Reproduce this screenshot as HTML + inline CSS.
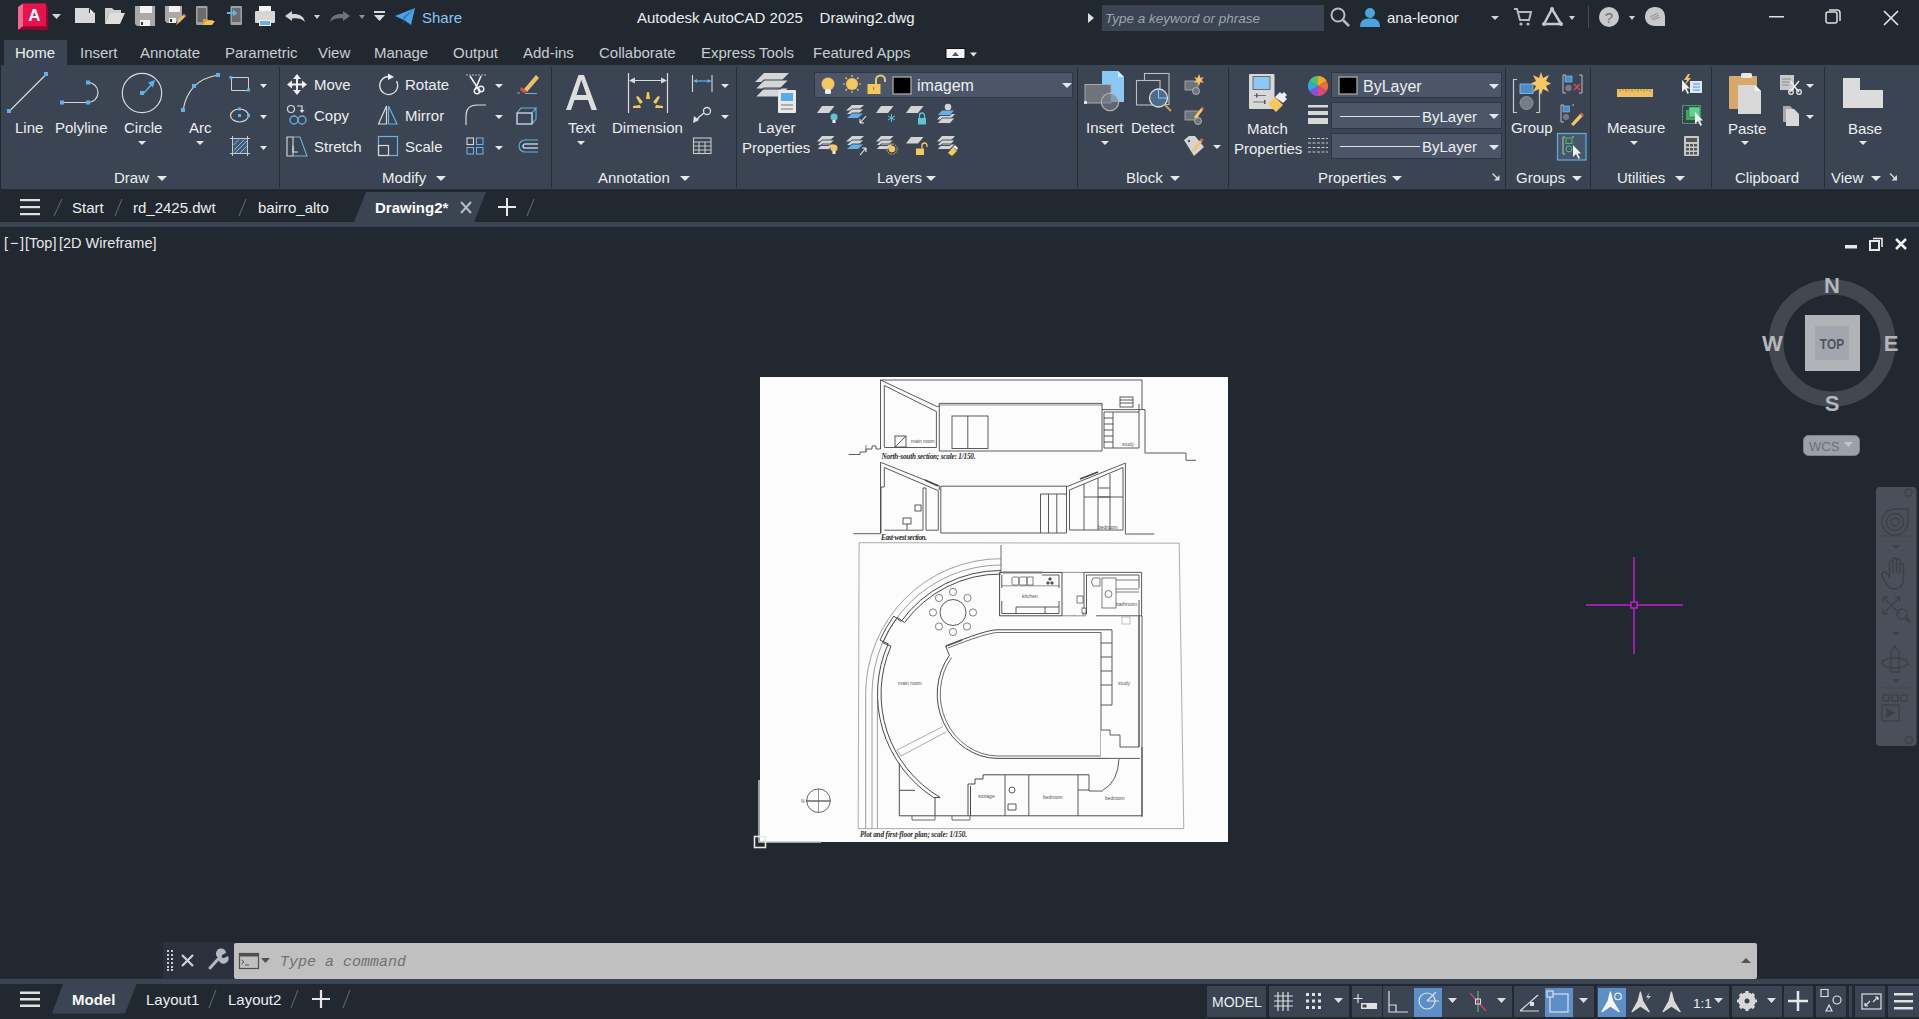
<!DOCTYPE html>
<html><head><meta charset="utf-8">
<style>
*{margin:0;padding:0;box-sizing:border-box}
html,body{width:1919px;height:1019px;overflow:hidden;background:#212830;font-family:"Liberation Sans",sans-serif;color:#f2f2f2}
.a{position:absolute}
.t{position:absolute;white-space:nowrap;font-size:15px;line-height:15px;color:#eceef0}
svg{position:absolute;overflow:visible}
#title{left:0;top:0;width:1919px;height:35px;background:#212830}
#tabs{left:0;top:35px;width:1919px;height:30px;background:#212830}
#ribbon{left:1px;top:65px;width:1918px;height:124px;background:#3b4453}
.sep{position:absolute;top:67px;width:1px;height:121px;background:#262d37}
#ftabs{left:0;top:189px;width:1919px;height:33px;background:#212830}
#strip{left:0;top:222px;width:1919px;height:5px;background:#3b4453}
#vp{left:0;top:227px;width:1919px;height:753px;background:#212830}
#cmd{left:234px;top:943px;width:1523px;height:36px;background:#c0c0c0;border-radius:2px}
#cmdl{left:163px;top:942px;width:72px;height:37px;background:#2a313c}
#strip2{left:0;top:979px;width:1919px;height:5px;background:#3b4453}
#status{left:0;top:984px;width:1919px;height:35px;background:#212830}
.dd{position:absolute;width:0;height:0;border-left:5px solid transparent;border-right:5px solid transparent;border-top:5px solid #e6e6e6}
.dds{position:absolute;width:0;height:0;border-left:4px solid transparent;border-right:4px solid transparent;border-top:4px solid #e6e6e6}
</style></head><body>
<div id="title" class="a"></div>
<div id="tabs" class="a"></div>
<div id="ribbon" class="a"></div>
<div id="ftabs" class="a"></div>
<div id="strip" class="a"></div>
<div id="vp" class="a"></div>
<div id="strip2" class="a"></div>
<div id="status" class="a"></div>
<div id="cmdl" class="a"></div>
<div id="cmd" class="a"></div>

<!-- TITLE TEXT -->
<div class="t" style="left:637px;top:10px">Autodesk AutoCAD 2025&nbsp;&nbsp;&nbsp;&nbsp;Drawing2.dwg</div>

<!-- TABS -->
<div class="a" style="left:4px;top:40px;width:63px;height:25px;background:#3b4453"></div>
<div class="t" style="left:15px;top:45px">Home</div>
<div class="t" style="left:80px;top:45px;color:#c9ccd1">Insert</div>
<div class="t" style="left:140px;top:45px;color:#c9ccd1">Annotate</div>
<div class="t" style="left:225px;top:45px;color:#c9ccd1">Parametric</div>
<div class="t" style="left:318px;top:45px;color:#c9ccd1">View</div>
<div class="t" style="left:374px;top:45px;color:#c9ccd1">Manage</div>
<div class="t" style="left:453px;top:45px;color:#c9ccd1">Output</div>
<div class="t" style="left:523px;top:45px;color:#c9ccd1">Add-ins</div>
<div class="t" style="left:599px;top:45px;color:#c9ccd1">Collaborate</div>
<div class="t" style="left:701px;top:45px;color:#c9ccd1">Express Tools</div>
<div class="t" style="left:813px;top:45px;color:#c9ccd1">Featured Apps</div>

<!-- PANEL SEPARATORS -->
<div class="sep" style="left:279px"></div>
<div class="sep" style="left:551px"></div>
<div class="sep" style="left:736px"></div>
<div class="sep" style="left:1077px"></div>
<div class="sep" style="left:1228px"></div>
<div class="sep" style="left:1505px"></div>
<div class="sep" style="left:1590px"></div>
<div class="sep" style="left:1711px"></div>
<div class="sep" style="left:1824px"></div>

<!-- PANEL LABELS -->
<div class="t" style="left:114px;top:170px">Draw</div>
<div class="t" style="left:382px;top:170px">Modify</div>
<div class="t" style="left:598px;top:170px">Annotation</div>
<div class="t" style="left:877px;top:170px">Layers</div>
<div class="t" style="left:1126px;top:170px">Block</div>
<div class="t" style="left:1318px;top:170px">Properties</div>
<div class="t" style="left:1516px;top:170px">Groups</div>
<div class="t" style="left:1617px;top:170px">Utilities</div>
<div class="t" style="left:1735px;top:170px">Clipboard</div>
<div class="t" style="left:1831px;top:170px">View</div>


<!-- ICON LAYER: TITLE -->
<svg width="1919" height="1019" style="left:0;top:0">
<!-- A logo -->
<polygon points="18,7 23,3.5 46,3.5 48,8 48,30 18,30" fill="#8e0a30"/>
<polygon points="18,7 23,3.5 23,26.5 18,30" fill="#f06a92"/>
<rect x="23" y="3.5" width="23" height="23" fill="#e8124e"/>
<polygon points="18,30 23,26.5 46,26.5 48,30" fill="#8a0a2e"/>
<text x="34.5" y="21" font-family="Liberation Sans" font-weight="bold" font-size="17" fill="#fff" text-anchor="middle">A</text>
<polygon points="52,14 61,14 56.5,19" fill="#d0d3d8"/>
<!-- new -->
<path d="M75,8 H89 L95,13 V23 H75 Z" fill="#d9d9d9"/>
<path d="M89,8 V13 H95 Z" fill="#212830"/><path d="M90,9 L94,13 H90Z" fill="#f4f4f4"/>
<!-- open -->
<path d="M105,8 H112 L114,10 H121 V13 H109 L105,24 Z" fill="#cfcfcf"/>
<path d="M109,13 H125 L120,24 H105 Z" fill="#dedede"/>
<!-- save -->
<path d="M135,6 H155 V26 H137 L135,24 Z" fill="#a9a9a9"/>
<rect x="140" y="6" width="12" height="7" fill="#f2f2f2"/>
<rect x="140" y="20" width="10" height="6" fill="#f2f2f2"/><rect x="141" y="22" width="2" height="3" fill="#333"/>
<!-- save as -->
<path d="M165,6 H182 V18 L175,23 H167 L165,21 Z" fill="#a9a9a9"/>
<rect x="169" y="6" width="11" height="6" fill="#f2f2f2"/>
<rect x="169" y="18" width="7" height="5" fill="#f2f2f2"/><rect x="170" y="19" width="2" height="3" fill="#333"/>
<path d="M176,25 L178,20 L184,14 L186,16 L180,22 Z" fill="#f0c060"/><path d="M183,15 L184,14 L186,16 L185,17Z" fill="#e06060"/>
<!-- open web -->
<rect x="196" y="6" width="11.5" height="19" rx="1" fill="#a0a0a0"/><rect x="197.5" y="8" width="8.5" height="14" fill="#6c6c6c"/>
<path d="M203,19 H207 L208,20 H213 V21 H206 L203,25 Z" fill="#e0a030"/><path d="M206,21 H215 L212,25 H203 Z" fill="#f5c454"/>
<!-- save web -->
<rect x="230.5" y="6" width="11.5" height="19" rx="1" fill="#a0a0a0"/><rect x="232" y="8" width="8.5" height="14" fill="#6c6c6c"/>
<path d="M227,12 H233 V9.5 L237.5,13 L233,16.5 V14 H227 Z" fill="#5ab4f0"/>
<!-- plot -->
<rect x="259" y="6" width="12" height="7" fill="#f4f4f4"/>
<rect x="255" y="11" width="20" height="12" rx="1" fill="#d6d6d6"/>
<rect x="259" y="20" width="12" height="6" fill="#f4f4f4"/><rect x="260" y="21" width="10" height="4" fill="#63b3ec"/>
<!-- undo -->
<path d="M285,16 L292,11 V14 C299,13.5 304,16 305,22 C302,18.5 297,18 292,18.5 V21 Z" fill="#d4d4d4"/>
<polygon points="314,15 320,15 317,19" fill="#d0d3d8"/>
<!-- redo -->
<path d="M350,16 L343,11 V14 C336,13.5 331,16 330,22 C333,18.5 338,18 343,18.5 V21 Z" fill="#6c737d"/>
<polygon points="359,15 365,15 362,19" fill="#8a9099"/>
<!-- customize -->
<rect x="374" y="11" width="11" height="2" fill="#d8d8d8"/><polygon points="374,15 385,15 379.5,21" fill="#d8d8d8"/>
<!-- share -->
<path d="M395,16 L415,8 L411,25 L404,20 Z" fill="#4aa3e6"/><path d="M404,20 L415,8 L403,17 L404,25 Z" fill="#2f7fc0"/>
</svg>
<div class="t" style="left:422px;top:10px;color:#8ec6f0">Share</div>


<!-- TITLE RIGHT -->
<svg width="1919" height="1019" style="left:0;top:0">
<polygon points="1088,13 1094,18 1088,23" fill="#e0e0e0"/>
<rect x="1102" y="5" width="222" height="26" fill="#3b4453"/>
<circle cx="1338" cy="15" r="6.5" fill="none" stroke="#b8bcc2" stroke-width="2"/>
<line x1="1343" y1="20" x2="1349" y2="26" stroke="#b8bcc2" stroke-width="2.5"/>
<circle cx="1370" cy="13" r="5" fill="#4da3e0"/>
<path d="M1360,27 C1360,20 1364,18.5 1370,18.5 C1376,18.5 1380,20 1380,27 Z" fill="#4da3e0"/>
<polygon points="1491,16 1499,16 1495,20" fill="#d0d3d8"/>
<!-- cart -->
<path d="M1514,9 H1517 L1520,20 H1529 L1531,12 H1518" fill="none" stroke="#b5b9bf" stroke-width="2"/>
<circle cx="1521" cy="24" r="1.6" fill="#b5b9bf"/><circle cx="1528" cy="24" r="1.6" fill="#b5b9bf"/>
<!-- autodesk A -->
<path d="M1552,9 L1544,24 H1561 Z" fill="none" stroke="#c4c7cc" stroke-width="2.5" stroke-linejoin="round"/>
<circle cx="1552" cy="9" r="2" fill="#c4c7cc"/><circle cx="1544" cy="24" r="2" fill="#c4c7cc"/><circle cx="1561" cy="24" r="2" fill="#c4c7cc"/>
<polygon points="1569,16 1575,16 1572,20" fill="#d0d3d8"/>
<rect x="1588" y="6" width="1" height="22" fill="#444c58"/>
<circle cx="1609" cy="17" r="10" fill="#c6c8cc"/>
<text x="1609" y="22.5" font-family="Liberation Sans" font-size="15" fill="#6c7078" text-anchor="middle">?</text>
<polygon points="1629,16 1635,16 1632,20" fill="#d0d3d8"/>
<path d="M1655,7 C1661,7 1665,11 1665,17 V26 H1655 C1649,26 1645,22 1645,17 C1645,11 1649,7 1655,7 Z" fill="#c6c8cc"/>
<path d="M1650,17 L1658,13 M1651,19 L1659,15 M1653,20 L1660,17" stroke="#8a8e95" stroke-width="1"/>
<!-- window controls -->
<rect x="1769" y="16" width="15" height="1.5" fill="#e0e0e0"/>
<rect x="1826" y="12" width="11" height="11" rx="2" fill="none" stroke="#e0e0e0" stroke-width="1.5"/>
<path d="M1829,10 H1837 Q1840,10 1840,13 V21" fill="none" stroke="#e0e0e0" stroke-width="1.5"/>
<path d="M1884,11 L1898,25 M1898,11 L1884,25" stroke="#e8e8e8" stroke-width="1.6"/>
</svg>
<div class="t" style="left:1105px;top:11px;font-style:italic;color:#9ca3ad;font-size:13.5px">Type a keyword or phrase</div>
<div class="t" style="left:1387px;top:10px;color:#eceef0">ana-leonor</div>


<!-- DRAW PANEL -->
<svg width="1919" height="1019" style="left:0;top:0">
<g stroke="#d8d8d8" stroke-width="1.2" fill="none">
<line x1="9.5" y1="111" x2="46" y2="74.5"/>
<path d="M62,102.5 H88 A10,10 0 0 0 88,82.5"/>
<circle cx="142" cy="93" r="19.7"/>
<path d="M183,110.5 Q188,80 218,75"/>
<path d="M231.5,77.5 H248.5 V90.5 H231.5 Z" stroke="#d0d0d0" stroke-width="1"/>
<ellipse cx="239.5" cy="115.5" rx="9" ry="6.5"/>
<path d="M232.5,136 V156 M247.5,136 V156 M230,138.5 H250 M230,153.5 H250" stroke="#c8c8c8" stroke-width="1"/>
</g>
<g fill="#5eb2ea">
<rect x="7" y="109" width="4" height="4"/><rect x="44" y="72" width="4" height="4"/>
<rect x="60" y="100.5" width="4" height="4"/><rect x="86" y="100.5" width="4" height="4"/><rect x="86" y="80.5" width="4" height="4"/>
<rect x="140" y="91" width="4" height="4"/>
<rect x="181" y="108" width="4" height="4"/><rect x="192" y="84" width="4" height="4"/><rect x="216" y="73" width="4" height="4"/>
<rect x="229.5" y="76" width="3" height="3"/><rect x="247" y="88.5" width="3" height="3"/>
<rect x="238" y="107.5" width="3" height="3"/><rect x="238" y="114" width="3" height="3"/><rect x="247" y="114" width="3" height="3"/>
</g>
<path d="M143,94 L153,83" stroke="#5eb2ea" stroke-width="1.4"/><polygon points="155,80 148,82.5 153,87.5" fill="#5eb2ea"/>
<rect x="233" y="139" width="14" height="14" fill="#4a6a8c" opacity="0.6"/>
<path d="M233.5,145 L239,139.5 M234,150 L244.5,139.5 M235,153 L247,141 M240,153 L247,146" stroke="#8cc0e8" stroke-width="0.9"/>
<g fill="#e6e6e6">
<polygon points="260,84 267,84 263.5,88"/><polygon points="260,115 267,115 263.5,119"/><polygon points="260,146 267,146 263.5,150"/>
<polygon points="138,141 146,141 142,145"/><polygon points="196,141 204,141 200,145"/>
<polygon points="157,176 167,176 162,181"/>
</g>
</svg>
<div class="t" style="left:15px;top:120px">Line</div>
<div class="t" style="left:55px;top:120px">Polyline</div>
<div class="t" style="left:124px;top:120px">Circle</div>
<div class="t" style="left:189px;top:120px">Arc</div>


<!-- MODIFY PANEL -->
<svg width="1919" height="1019" style="left:0;top:0">
<!-- move -->
<g fill="#f0f0f0">
<rect x="296" y="78" width="2" height="13"/><rect x="290" y="83.5" width="13" height="2"/>
<polygon points="297,74 301,79 293,79"/><polygon points="297,95 301,90 293,90"/>
<polygon points="287,84.5 292,80.5 292,88.5"/><polygon points="307,84.5 302,80.5 302,88.5"/>
</g>
<!-- copy -->
<circle cx="291" cy="109" r="3.5" fill="none" stroke="#d8d8d8" stroke-width="1.2"/>
<path d="M297,106 H302 V111" fill="none" stroke="#e0e0e0" stroke-width="1.2"/><polygon points="299.5,110 304.5,110 302,113" fill="#e0e0e0"/>
<circle cx="294" cy="120" r="4" fill="none" stroke="#6ab0e0" stroke-width="1.3"/>
<circle cx="302" cy="120" r="4" fill="none" stroke="#6ab0e0" stroke-width="1.3"/>
<!-- stretch -->
<path d="M287,137 H293 V156 H287 Z" fill="none" stroke="#d8d8d8" stroke-width="1.1"/>
<path d="M293,137 H300 L307,156 H293" fill="none" stroke="#6ab0e0" stroke-width="1.1"/>
<path d="M293,146 V152 H298" fill="none" stroke="#e0e0e0" stroke-width="1.1"/>
<!-- rotate -->
<path d="M389,76.5 A9,9 0 1 0 396.5,81" fill="none" stroke="#e0e0e0" stroke-width="1.3"/>
<polygon points="388,73.5 394,77 388,80" fill="#f0f0f0"/>
<!-- mirror -->
<path d="M386.5,106 L378.5,124 H386.5 Z" fill="none" stroke="#d8d8d8" stroke-width="1.2"/>
<path d="M388.5,106 L397,124 H388.5 Z" fill="none" stroke="#6ab0e0" stroke-width="1.2"/>
<!-- scale -->
<rect x="378.5" y="136.5" width="19" height="19" fill="none" stroke="#6ab0e0" stroke-width="1.2"/>
<rect x="378.5" y="145.5" width="10" height="10" fill="none" stroke="#d8d8d8" stroke-width="1.2"/>
<!-- trim -->
<path d="M466,75 H486" stroke="#b8b8b8" stroke-width="1.2" stroke-dasharray="2,1"/>
<path d="M470,76 L479,90 M481,76 L475,90" stroke="#f0f0f0" stroke-width="1.6"/>
<circle cx="477" cy="91" r="2.8" fill="none" stroke="#f0f0f0" stroke-width="1.4"/>
<circle cx="481" cy="89" r="2.8" fill="none" stroke="#f0f0f0" stroke-width="1.4"/>
<!-- erase -->
<path d="M524,89 L536,75 L539,78 L527,92 Z" fill="#f0c060"/>
<path d="M521,87 L524,89 L527,92 L524,93 L520,90Z" fill="#e05050"/>
<path d="M517,93 H520 M525,93.5 H537" stroke="#6ab0e0" stroke-width="1"/>
<!-- fillet -->
<path d="M466,125 V116 Q466,105 477,105 H486" fill="none" stroke="#d8d8d8" stroke-width="1.2"/>
<!-- 3d box -->
<path d="M517,113 H532 V124 H517 Z M517,113 L521,108 H536 L532,113 M536,108 V119 L532,124" fill="none" stroke="#6ab0e0" stroke-width="1.1"/>
<path d="M517,113 H532 V124 H517 Z" fill="none" stroke="#d8d8d8" stroke-width="1.1"/>
<!-- array -->
<g fill="none" stroke-width="1.1">
<rect x="467" y="138" width="6.5" height="6.5" stroke="#d8d8d8"/><rect x="476.5" y="138" width="6.5" height="6.5" stroke="#6ab0e0"/>
<rect x="467" y="147.5" width="6.5" height="6.5" stroke="#6ab0e0"/><rect x="476.5" y="147.5" width="6.5" height="6.5" stroke="#6ab0e0"/>
</g>
<!-- offset -->
<path d="M538,140 H525 A6,6 0 0 0 525,152 H538 M538,144 H525 A2,2 0 0 0 525,148 H538" fill="none" stroke="#6ab0e0" stroke-width="1.1"/>
<path d="M538,144 H525 A2,2 0 0 0 525,148 H538" fill="none" stroke="#d8d8d8" stroke-width="1.1"/>
<g fill="#e6e6e6">
<polygon points="495,84 503,84 499,88"/><polygon points="495,115 503,115 499,119"/><polygon points="495,146 503,146 499,150"/>
<polygon points="436,176 446,176 441,181"/>
</g>
</svg>
<div class="t" style="left:314px;top:77px">Move</div>
<div class="t" style="left:405px;top:77px">Rotate</div>
<div class="t" style="left:314px;top:108px">Copy</div>
<div class="t" style="left:405px;top:108px">Mirror</div>
<div class="t" style="left:314px;top:139px">Stretch</div>
<div class="t" style="left:405px;top:139px">Scale</div>


<!-- ANNOTATION PANEL -->
<svg width="1919" height="1019" style="left:0;top:0">
<path d="M566,110 L578.5,75 H584 L597,110 H591.5 L588,100 H574.5 L571,110 Z M576.5,95 H586.5 L581.3,80 Z" fill="#dedede"/>
<!-- dimension -->
<path d="M628.5,73 V113 M667.5,73 V113" stroke="#dadada" stroke-width="1.2"/>
<path d="M630,80.5 H666" stroke="#dadada" stroke-width="1.2"/>
<polygon points="629,80.5 635,77.5 635,83.5" fill="#dadada"/><polygon points="667,80.5 661,77.5 661,83.5" fill="#dadada"/>
<g fill="#f5c55e">
<polygon points="647,92 649,92 650,99 646,99"/>
<polygon points="636,97 638,96 643,102 640,104"/><polygon points="658,96 660,97 656,104 653,102"/>
<polygon points="633,106 640,105 641,108 633,108"/><polygon points="663,106 656,105 655,108 663,108"/>
</g>
<!-- small annot -->
<path d="M692.5,75 V92 M712,75 V92" stroke="#d8d8d8" stroke-width="1.1"/>
<path d="M694,81 H711" stroke="#6ab0e0" stroke-width="1.2"/>
<polygon points="693.5,81 697,79 697,83" fill="#6ab0e0"/><polygon points="711,81 707.5,79 707.5,83" fill="#6ab0e0"/>
<circle cx="707" cy="111" r="3.5" fill="none" stroke="#e0e0e0" stroke-width="1.3"/>
<path d="M704,113 L699,117 L696,121" fill="none" stroke="#e0e0e0" stroke-width="1.3"/>
<polygon points="693,123 694,116 699,120" fill="#e0e0e0"/>
<g fill="none" stroke="#c8c8c8" stroke-width="1.1"><rect x="693.5" y="138" width="17.5" height="15.5"/><path d="M693.5,142 H711 M693.5,146 H711 M693.5,150 H711 M699,142 V153.5 M705,142 V153.5"/></g>
<g fill="#e6e6e6">
<polygon points="721,84 729,84 725,88"/><polygon points="721,115 729,115 725,119"/>
<polygon points="577,141 585,141 581,145"/>
<polygon points="680,176 690,176 685,181"/>
</g>
<!-- layer properties -->
<g fill="#d6d6d6">
<polygon points="764,73 789,73 780,82 755,82"/><polygon points="764,80 789,80 780,89 755,89" />
<polygon points="764,88 789,88 780,97 755,97"/>
</g>
<g stroke="#3b4453" stroke-width="1.2" fill="none"><polygon points="764,80 789,80 780,89 755,89"/><polygon points="764,88 789,88 780,97 755,97"/></g>
<rect x="778" y="90" width="18" height="23" rx="1" fill="#e8e8e8"/>
<rect x="781" y="93" width="12" height="8" fill="#55acea"/>
<path d="M781,105 H793 M781,109 H793" stroke="#777" stroke-width="1"/>
</svg>
<div class="t" style="left:568px;top:120px">Text</div>
<div class="t" style="left:612px;top:120px">Dimension</div>
<div class="t" style="left:758px;top:120px">Layer</div>
<div class="t" style="left:742px;top:140px">Properties</div>

<!-- LAYERS PANEL -->
<div class="a" style="left:814px;top:72px;width:259px;height:26px;background:#4c5669;border:1px solid #2f3744"></div>
<svg width="1919" height="1019" style="left:0;top:0">
<circle cx="828" cy="84" r="6.5" fill="#f5c760"/><rect x="825" y="89" width="6" height="5" rx="1.5" fill="#f0f0f0"/>
<circle cx="852" cy="84" r="6" fill="#f5c760"/>
<g stroke="#f5c760" stroke-width="1.2"><path d="M852,75 V77 M852,91 V93 M843,84 H845 M859,84 H861 M845.5,77.5 L847,79 M857,89 L858.5,90.5 M858.5,77.5 L857,79 M847,89 L845.5,90.5"/></g>
<rect x="867.5" y="84" width="13" height="10" fill="#f5c760"/>
<path d="M876,84 V80 A4.5,4.5 0 0 1 885,80 V82" fill="none" stroke="#f5c760" stroke-width="2"/>
<rect x="873" y="87" width="1.2" height="3" fill="#a88030"/>
<rect x="893" y="77" width="18" height="17" fill="#000" stroke="#a8a8a8" stroke-width="1.3"/>
<polygon points="1062,83 1072,83 1067,88" fill="#e6e6e6"/>
</svg>
<div class="t" style="left:917px;top:78px;font-size:16px;line-height:16px">imagem</div>
<svg width="1919" height="1019" style="left:0;top:0">
<g fill="#d4d4d4">
<!-- row1 -->
<polygon points="822,106 834.5,106 829,113 817,113"/>
<polygon points="852,105 864,105 858,110.5 846,110.5"/><polygon points="852,109 864,109 858,114.5 846,114.5"/>
<polygon points="881,106 893.5,106 888,113 876,113"/>
<polygon points="911,106 923.5,106 918,113 906,113"/>
<polygon points="942,114 955,114 950,119.5 937,119.5"/><polygon points="942,118 955,118 950,123.5 937,123.5"/>
<!-- row2 -->
<polygon points="822,136 834.5,136 829,141.5 817,141.5"/><polygon points="822,140 834.5,140 829,145.5 817,145.5"/><polygon points="822,144 834.5,144 829,149.5 817,149.5"/>
<polygon points="852,136 864,136 858,141.5 846,141.5"/><polygon points="852,140 864,140 858,145.5 846,145.5"/>
<polygon points="881,136 893.5,136 888,141.5 876,141.5"/><polygon points="881,140 893.5,140 888,145.5 876,145.5"/><polygon points="881,144 893.5,144 888,149.5 876,149.5"/>
<polygon points="911,137 923.5,137 918,143.5 906,143.5"/>
<polygon points="942,136 955,136 950,141.5 937,141.5"/><polygon points="942,140 955,140 950,145.5 937,145.5"/><polygon points="942,144 955,144 950,149.5 937,149.5"/>
</g>
<g stroke="#3b4453" stroke-width="0.9" fill="none">
<polygon points="852,109 864,109 858,114.5 846,114.5"/><polygon points="942,118 955,118 950,123.5 937,123.5"/>
<polygon points="822,140 834.5,140 829,145.5 817,145.5"/><polygon points="822,144 834.5,144 829,149.5 817,149.5"/>
<polygon points="852,140 864,140 858,145.5 846,145.5"/>
<polygon points="881,140 893.5,140 888,145.5 876,145.5"/><polygon points="881,144 893.5,144 888,149.5 876,149.5"/>
<polygon points="942,140 955,140 950,145.5 937,145.5"/><polygon points="942,144 955,144 950,149.5 937,149.5"/>
</g>
<polygon points="852,113 864,113 858,118.5 846,118.5" fill="#66aee6" stroke="#3b4453" stroke-width="0.9"/>
<polygon points="852,144 864,144 858,149.5 846,149.5" fill="#66aee6" stroke="#3b4453" stroke-width="0.9"/>
<polygon points="942,110 955,110 950,115.5 937,115.5" fill="#66aee6" stroke="#3b4453" stroke-width="0.9"/>
<circle cx="948" cy="107" r="3.3" fill="#d4d4d4"/>
<!-- bulbs -->
<circle cx="834" cy="117" r="3.5" fill="#5cc6d6"/><rect x="832.5" y="120" width="3" height="3" fill="#eee"/>
<circle cx="834" cy="148" r="3.5" fill="#f5c760"/><rect x="832.5" y="151" width="3" height="3" fill="#eee"/>
<path d="M866,116 L860,123 M860,123 H864 M860,123 V119" stroke="#eee" stroke-width="1.1" fill="none"/>
<path d="M860,155 L866,148 M866,148 H862 M866,148 V152" stroke="#eee" stroke-width="1.1" fill="none"/>
<g stroke="#5cc6d6" stroke-width="1"><path d="M891.5,114 V122 M888,116 L895,120 M895,116 L888,120"/></g>
<rect x="918" y="118" width="8" height="6.5" fill="#5cc6d6"/><path d="M919.5,118 V115.5 A2.5,2.5 0 0 1 924.5,115.5 V118" fill="none" stroke="#5cc6d6" stroke-width="1.3"/>
<circle cx="892" cy="149" r="3.3" fill="#f5c760"/><circle cx="892" cy="149" r="5.2" fill="none" stroke="#f5c760" stroke-width="1" stroke-dasharray="1.5,1.2"/>
<rect x="916" y="148.5" width="8" height="6.5" fill="#f5c760"/><path d="M922,148.5 V145.5 A2.5,2.5 0 0 1 927,145.5 V147" fill="none" stroke="#f5c760" stroke-width="1.3"/>
<path d="M948,153 L953,147 L957,151 L952,156 Z" fill="#f5c760"/><path d="M953,147 L955,145 L958,148 L957,150Z" fill="#eee"/>
<polygon points="926,176 936,176 931,181" fill="#e6e6e6"/>
</g>
</svg>


<!-- BLOCK PANEL -->
<svg width="1919" height="1019" style="left:0;top:0">
<path d="M1102,71 H1118 L1124,77 V102 H1102 Z" fill="#8cc8f4"/><path d="M1118,71 V77 H1124 Z" fill="#d8ecfa"/>
<rect x="1085" y="84.5" width="26" height="18.5" fill="#6e737c" stroke="#a8a8a8" stroke-width="1"/>
<circle cx="1110" cy="102" r="8.7" fill="#7a7f87" fill-opacity="0.6" stroke="#b8b8b8" stroke-width="1.1"/>
<rect x="1084" y="101" width="3" height="3" fill="#e0e0e0"/>
<rect x="1144.5" y="73.5" width="24.5" height="31" fill="none" stroke="#bdbdbd" stroke-width="1.1"/>
<rect x="1136.5" y="80.5" width="23.5" height="24.5" fill="#3b4453" stroke="#bdbdbd" stroke-width="1.1"/>
<circle cx="1158.5" cy="98" r="9" fill="#4d6b8e" stroke="#e0e0e0" stroke-width="1.3"/>
<path d="M1158.5,89 V98 H1167" stroke="#8cc8f4" stroke-width="1" fill="none"/>
<path d="M1165,105 L1171,111" stroke="#c8a060" stroke-width="2"/>
<!-- small -->
<rect x="1185" y="81" width="13" height="9" fill="#6e737c" stroke="#a8a8a8" stroke-width="0.9"/>
<circle cx="1196" cy="91" r="3.5" fill="#6e737c" stroke="#b8b8b8" stroke-width="0.9"/>
<polygon points="1199,74 1200.5,78 1204,77 1201.5,80 1204,83 1200.5,82 1199,86 1197.5,82 1194,83 1196.5,80 1194,77 1197.5,78" fill="#f5c760"/>
<rect x="1185" y="111" width="13" height="9" fill="#6e737c" stroke="#a8a8a8" stroke-width="0.9"/>
<circle cx="1198" cy="121" r="3.5" fill="#6e737c" stroke="#b8b8b8" stroke-width="0.9"/>
<path d="M1194,117 L1201,108 L1203,110 L1196,119 Z" fill="#f5c760"/><path d="M1201,108 L1202,106.5 L1204,108.5 L1203,110Z" fill="#e06060"/>
<path d="M1184,140 L1189,136 H1195 L1204,147 L1194,156 Z" fill="#d4d4d4"/><circle cx="1189" cy="141" r="1.2" fill="#555"/>
<path d="M1192,150 L1200,140 L1202,142 L1194,152 Z" fill="#f5c760"/><path d="M1200,140 L1201.5,138 L1203.5,140 L1202,142Z" fill="#e06060"/>
<polygon points="1213,145 1221,145 1217,149" fill="#e6e6e6"/>
<polygon points="1101,141 1109,141 1105,145" fill="#e6e6e6"/>
<polygon points="1170,176 1180,176 1175,181" fill="#e6e6e6"/>
</svg>
<div class="t" style="left:1086px;top:120px">Insert</div>
<div class="t" style="left:1131px;top:120px">Detect</div>

<!-- PROPERTIES PANEL -->
<svg width="1919" height="1019" style="left:0;top:0">
<rect x="1249" y="74" width="25.5" height="35" rx="1" fill="#d8d8d8"/>
<rect x="1253" y="76.5" width="17" height="13" fill="#8cc8f4" stroke="#555" stroke-width="0.8"/>
<path d="M1254,95.5 H1266 M1253,102 H1264" stroke="#777" stroke-width="1"/><rect x="1256" y="93.5" width="1.5" height="4" fill="#555"/><rect x="1264" y="100" width="1.5" height="4" fill="#555"/>
<path d="M1268,104 L1275,97 L1283,105 L1276,112 Z" fill="#f5c760"/>
<path d="M1275,97 L1280,92 L1282,94 L1284,92 L1287,95 L1285,97 L1287,99 L1283,103 Z" fill="#efefef"/>
<!-- color wheel -->
<g transform="translate(1318,86)">
<path d="M0,0 L0,-10 A10,10 0 0 1 8.66,-5 Z" fill="#f5a623"/>
<path d="M0,0 L8.66,-5 A10,10 0 0 1 8.66,5 Z" fill="#f06a3a"/>
<path d="M0,0 L8.66,5 A10,10 0 0 1 0,10 Z" fill="#e0457a"/>
<path d="M0,0 L0,10 A10,10 0 0 1 -8.66,5 Z" fill="#8b4fe0"/>
<path d="M0,0 L-8.66,5 A10,10 0 0 1 -8.66,-5 Z" fill="#2fa8e0"/>
<path d="M0,0 L-8.66,-5 A10,10 0 0 1 0,-10 Z" fill="#4cc46a"/>
</g>
<g fill="#d8d8d8"><rect x="1308" y="105" width="20" height="2.5"/><rect x="1308" y="111" width="20" height="4"/><rect x="1308" y="118" width="20" height="6"/></g>
<g stroke="#c8c8c8" stroke-width="1" stroke-dasharray="3,1.5"><path d="M1308,138.5 H1328 M1308,143 H1328 M1308,147.5 H1328 M1308,152 H1328"/></g>
</svg>
<div class="a" style="left:1331px;top:72px;width:171px;height:26px;background:#4c5669;border:1px solid #2f3744"></div>
<div class="a" style="left:1331px;top:102px;width:171px;height:27px;background:#4c5669;border:1px solid #2f3744"></div>
<div class="a" style="left:1331px;top:133px;width:171px;height:26px;background:#4c5669;border:1px solid #2f3744"></div>
<svg width="1919" height="1019" style="left:0;top:0">
<rect x="1339" y="77" width="18" height="17" fill="#000" stroke="#a8a8a8" stroke-width="1.3"/>
<path d="M1340,116.5 H1420 M1340,146.5 H1420" stroke="#e0e0e0" stroke-width="1.2"/>
<g fill="#e6e6e6"><polygon points="1489,84 1499,84 1494,89"/><polygon points="1489,114 1499,114 1494,119"/><polygon points="1489,145 1499,145 1494,150"/>
<polygon points="1392,176 1402,176 1397,181"/></g>
<path d="M1492.5,173.5 L1497.5,178.5" stroke="#d8d8d8" stroke-width="1.4"/><polygon points="1499.5,175 1499.5,180.5 1494,180.5" fill="#d8d8d8"/>
</svg>
<div class="t" style="left:1363px;top:79px;font-size:16px;line-height:16px">ByLayer</div>
<div class="t" style="left:1422px;top:109px;font-size:15px">ByLayer</div>
<div class="t" style="left:1422px;top:139px;font-size:15px">ByLayer</div>
<div class="t" style="left:1247px;top:121px">Match</div>
<div class="t" style="left:1234px;top:141px">Properties</div>


<!-- GROUPS / UTILITIES / CLIPBOARD / VIEW -->
<svg width="1919" height="1019" style="left:0;top:0">
<path d="M1517,79.5 H1513.5 V112.5 H1517 M1536,79.5 H1539.5 V112.5 H1536" fill="none" stroke="#c8c8c8" stroke-width="1.2"/>
<rect x="1520" y="84" width="13" height="9.5" fill="#4d8cc4" stroke="#8cc8f4" stroke-width="0.8"/>
<circle cx="1526.5" cy="103" r="6.5" fill="#777c84" stroke="#9a9ea5" stroke-width="0.8"/>
<polygon points="1541,72 1543,78 1549,75 1546,81 1551,83.5 1546,86 1549,92 1543,89 1541,95 1539,89 1533,92 1536,86 1531,83.5 1536,81 1533,75 1539,78" fill="#f5c760"/>
<!-- ungroup -->
<path d="M1566,75 H1563 V93 H1566 M1579,75 H1582 V93 H1579" fill="none" stroke="#bdbdbd" stroke-width="1"/>
<rect x="1565" y="76" width="7" height="6" fill="#4d8cc4" stroke="#8cc8f4" stroke-width="0.6"/><circle cx="1568.5" cy="88" r="3.2" fill="#777c84"/>
<path d="M1574,84 L1580,90 M1580,84 L1574,90" stroke="#e04848" stroke-width="1.6"/>
<path d="M1564,105 H1561 V122 H1564 M1572,105 H1574" fill="none" stroke="#bdbdbd" stroke-width="1"/>
<rect x="1563" y="106" width="6.5" height="6" fill="#4d8cc4" stroke="#8cc8f4" stroke-width="0.6"/><circle cx="1566" cy="117" r="3" fill="#777c84"/>
<path d="M1571,124 L1580,114 L1582.5,116.5 L1573.5,126 Z" fill="#f5c760"/><path d="M1580,114 L1581.5,112.5 L1584,115 L1582.5,116.5Z" fill="#e06060"/>
<rect x="1557.5" y="133.5" width="28.5" height="26.5" fill="#48586c" stroke="#5aaeea" stroke-width="1.2"/>
<path d="M1565,137 H1563 V154 H1565 M1572,137 H1574" fill="none" stroke="#bdbdbd" stroke-width="1"/>
<rect x="1566" y="138" width="6" height="5.5" fill="none" stroke="#50c070" stroke-width="1"/><circle cx="1569" cy="149" r="3" fill="none" stroke="#50c070" stroke-width="1"/>
<path d="M1573,145 V157 L1576,154 L1578.5,159 L1580,158 L1577.5,153.5 H1581 Z" fill="#f0f0f0"/>
<!-- measure -->
<rect x="1617" y="89" width="36" height="8" fill="#f0c060"/>
<path d="M1620,89 V92 M1623,89 V91 M1626,89 V92 M1629,89 V91 M1632,89 V92 M1635,89 V91 M1638,89 V92 M1641,89 V91 M1644,89 V92 M1647,89 V91 M1650,89 V92" stroke="#a07828" stroke-width="0.8"/>
<polygon points="1630,141 1638,141 1634,145" fill="#e6e6e6"/>
<!-- quick select -->
<rect x="1690" y="81" width="12" height="12" fill="#dfe9f4"/><path d="M1693,84 H1700 M1693,87 H1700 M1693,90 H1700" stroke="#4a90d0" stroke-width="1"/>
<path d="M1682,80 V92 L1685,89 L1687.5,94 L1689,93 L1686.5,88.5 H1690 Z" fill="#f0f0f0"/>
<polygon points="1688,74 1684,80 1687,80 1685,85 1691,78 1688,78 1690,74" fill="#f5c760"/>
<rect x="1682.5" y="105.5" width="18" height="18" fill="none" stroke="#50c070" stroke-width="1" stroke-dasharray="2,1"/>
<rect x="1686" y="110" width="11" height="10" fill="#40a860"/><rect x="1689" y="107" width="11" height="10" fill="#60d090" stroke="#2f7a48" stroke-width="0.6"/>
<path d="M1695,112 V124 L1698,121 L1700.5,126 L1702,125 L1699.5,120.5 H1703 Z" fill="#f0f0f0"/>
<rect x="1684" y="136" width="15" height="20" rx="1" fill="#c8c8c8"/><rect x="1686" y="138" width="11" height="4" fill="#555"/>
<g fill="#555"><rect x="1686" y="144" width="3" height="2.5"/><rect x="1690" y="144" width="3" height="2.5"/><rect x="1694" y="144" width="3" height="2.5"/>
<rect x="1686" y="148" width="3" height="2.5"/><rect x="1690" y="148" width="3" height="2.5"/><rect x="1694" y="148" width="3" height="2.5"/>
<rect x="1686" y="152" width="3" height="2.5"/><rect x="1690" y="152" width="3" height="2.5"/><rect x="1694" y="152" width="3" height="2.5"/></g>
<!-- paste -->
<rect x="1729" y="76" width="28" height="33" rx="1" fill="#d8a868"/>
<rect x="1741" y="73" width="11" height="5" rx="1.5" fill="#e8e8e8"/>
<path d="M1738,85 H1755 L1761,91 V114 H1738 Z" fill="#d8d8d8"/><path d="M1755,85 V91 H1761 Z" fill="#f4f4f4"/>
<polygon points="1741,141 1749,141 1745,145" fill="#e6e6e6"/>
<!-- cut -->
<rect x="1780" y="75" width="14" height="15" fill="#c8c8c8"/><path d="M1782,79 H1791 M1782,82 H1791 M1782,85 H1789" stroke="#888" stroke-width="1"/>
<path d="M1790,81 L1799,92 M1799,81 L1790,92" stroke="#f0f0f0" stroke-width="1.4"/>
<circle cx="1791" cy="92" r="2.3" fill="none" stroke="#f0f0f0" stroke-width="1.2"/><circle cx="1799" cy="92" r="2.3" fill="none" stroke="#f0f0f0" stroke-width="1.2"/>
<path d="M1783,106 H1790 L1793,109 V122 H1783 Z" fill="#a8a8a8"/>
<path d="M1786,109 H1794 L1799,114 V126 H1786 Z" fill="#d8d8d8"/>
<polygon points="1806,84 1814,84 1810,88" fill="#e6e6e6"/><polygon points="1806,115 1814,115 1810,119" fill="#e6e6e6"/>
<!-- base -->
<path d="M1843,78 H1860 V90 H1883 V108 H1843 Z" fill="#dcdcdc"/>
<polygon points="1859,141 1867,141 1863,145" fill="#e6e6e6"/>
<!-- labels arrows -->
<g fill="#e6e6e6"><polygon points="1572,176 1582,176 1577,181"/><polygon points="1675,176 1685,176 1680,181"/><polygon points="1871,176 1881,176 1876,181"/></g>
<path d="M1890,173.5 L1895,178.5" stroke="#d8d8d8" stroke-width="1.4"/><polygon points="1897,175 1897,180.5 1891.5,180.5" fill="#d8d8d8"/>
</svg>
<div class="t" style="left:1511px;top:120px">Group</div>
<div class="t" style="left:1607px;top:120px">Measure</div>
<div class="t" style="left:1728px;top:121px">Paste</div>
<div class="t" style="left:1848px;top:121px">Base</div>


<!-- FILE TABS -->
<svg width="1919" height="1019" style="left:0;top:0">
<polygon points="366,192 486,192 474,222 354,222" fill="#3b4453"/>
<g fill="#e0e0e0"><rect x="20" y="199" width="20" height="2.2"/><rect x="20" y="206" width="20" height="2.2"/><rect x="20" y="213" width="20" height="2.2"/></g>
<g stroke="#5a6270" stroke-width="1.1"><path d="M62,199 L54,216 M122,199 L115,216 M246,199 L239,216 M534,199 L527,216"/></g>
<path d="M461,202 L471,213 M471,202 L461,213" stroke="#b8bcc4" stroke-width="2"/>
<path d="M507,198 V216 M498,207 H516" stroke="#e8e8e8" stroke-width="2"/>
<!-- viewport controls -->
<rect x="1845" y="245" width="12" height="3.5" fill="#e8e8e8"/>
<rect x="1870" y="241" width="9" height="9" fill="none" stroke="#e8e8e8" stroke-width="2"/>
<path d="M1873,238.5 H1882 V247" fill="none" stroke="#e8e8e8" stroke-width="1.6"/>
<path d="M1896,239 L1906,249 M1906,239 L1896,249" stroke="#f0f0f0" stroke-width="2.5"/>
</svg>
<div class="t" style="left:72px;top:200px">Start</div>
<div class="t" style="left:133px;top:200px">rd_2425.dwt</div>
<div class="t" style="left:258px;top:200px">bairro_alto</div>
<div class="t" style="left:375px;top:200px;font-weight:bold;color:#fafafa">Drawing2*</div>
<div class="t" style="left:4px;top:236px;font-size:14.5px;color:#e6e8ea">[</div>
<div class="t" style="left:10px;top:236px;font-size:14.5px;color:#e6e8ea">−</div>
<div class="t" style="left:20px;top:236px;font-size:14.5px;color:#e6e8ea">]</div>
<div class="t" style="left:25px;top:236px;font-size:14.5px;color:#e6e8ea">[Top]</div>
<div class="t" style="left:59px;top:236px;font-size:14.5px;color:#e6e8ea">[2D Wireframe]</div>
<svg width="1919" height="1019" style="left:0;top:0">
<rect x="946" y="48.5" width="19" height="10" fill="#f4f4f4" stroke="#10141a" stroke-width="1"/>
<polygon points="952,56 959,56 955.5,52" fill="#555"/>
<polygon points="970,52.5 977,52.5 973.5,56.5" fill="#e8e8e8"/>
</svg>


<!-- VIEWCUBE -->
<svg width="1919" height="1019" style="left:0;top:0">
<circle cx="1832" cy="343" r="56" fill="none" stroke="#42484f" stroke-width="15"/>
<rect x="1805" y="315" width="55" height="56" fill="#b1b3b7"/>
<rect x="1815" y="326" width="34" height="34" fill="#a3a7ad"/>
<text x="1832" y="349" font-family="Liberation Sans" font-weight="bold" font-size="14" fill="#50545b" text-anchor="middle" transform="translate(1832,343) scale(0.85,1) translate(-1832,-343)">TOP</text>
<g font-family="Liberation Sans" font-weight="bold" font-size="22" fill="#b4b6ba" text-anchor="middle">
<text x="1832" y="292.5">N</text><text x="1832" y="411">S</text><text x="1772.5" y="351">W</text><text x="1891" y="351">E</text>
</g>
<rect x="1803.5" y="435.5" width="56" height="20" rx="5" fill="#9ca0a8" stroke="#7d828a" stroke-width="1"/>
<text x="1809" y="450.5" font-family="Liberation Sans" font-size="13" fill="#6e7279">WCS</text>
<polygon points="1844,442 1853,442 1848.5,447" fill="#c4c6ca"/>
<!-- NAVBAR -->
<rect x="1876" y="487" width="40.5" height="259" rx="4" fill="#4a5059"/>
<g fill="none" stroke="#3b4048" stroke-width="1.3">
<circle cx="1908.5" cy="492.5" r="3.5"/>
<path d="M1895,509 A13,13 0 1 0 1908,522 V509 Z"/><circle cx="1895" cy="522" r="8.5"/><circle cx="1895" cy="522" r="4"/>
<path d="M1886,583 C1883,578 1880,574 1883,572 C1886,571 1888,575 1889.5,577 V563 C1889.5,560.5 1893,560.5 1893,563 V573 V559.5 C1893,557 1896.5,557 1896.5,559.5 V573 V561 C1896.5,558.5 1900,558.5 1900,561 V574 V565 C1900,562.5 1903.5,562.5 1903.5,565 V579 C1903.5,585 1900,589 1894.5,589 C1891,589 1888,587 1886,583 Z" stroke-width="1.5"/>
<path d="M1883,597 L1900,614 M1900,597 L1883,614 M1883,597 H1888 M1883,597 V602 M1900,597 H1895 M1900,597 V602 M1883,614 V609 M1883,614 H1888"/>
<circle cx="1902" cy="614" r="5"/><path d="M1906,618 L1910,622" stroke-width="2.5"/>
<path d="M1891,672 V652 L1895,646 L1899,652 V672 Z"/><ellipse cx="1895" cy="663" rx="13" ry="5"/>
<rect x="1883" y="695" width="6" height="6"/><rect x="1892" y="695" width="6" height="6"/><rect x="1901" y="695" width="6" height="6"/>
<rect x="1882" y="705" width="17" height="16"/><path d="M1887,709 L1894,713 L1887,717 Z" fill="#3b4048"/>
<circle cx="1909" cy="740" r="3.5"/>
</g>
<g fill="#3b4048"><polygon points="1892,545 1900,545 1896,549"/><polygon points="1892,632 1900,632 1896,636"/><polygon points="1892,679 1900,679 1896,683"/></g>
<path d="M1880,536 H1912 M1880,688 H1912" stroke="#41464f" stroke-width="1"/>
<!-- CROSSHAIR -->
<g stroke="#c41ccc" stroke-width="1.5" fill="none">
<path d="M1586,605 H1631 M1637,605 H1683 M1634,557 V602 M1634,608 V654"/>
<rect x="1631" y="602" width="6" height="6"/>
</g>
</svg>

<!-- COMMAND LINE -->
<svg width="1919" height="1019" style="left:0;top:0">
<g fill="#c8cacd"><rect x="167" y="950" width="2" height="2"/><rect x="171" y="950" width="2" height="2"/><rect x="167" y="954" width="2" height="2"/><rect x="171" y="954" width="2" height="2"/>
<rect x="167" y="958" width="2" height="2"/><rect x="171" y="958" width="2" height="2"/><rect x="167" y="962" width="2" height="2"/><rect x="171" y="962" width="2" height="2"/>
<rect x="167" y="966" width="2" height="2"/><rect x="171" y="966" width="2" height="2"/><rect x="167" y="969" width="2" height="2"/><rect x="171" y="969" width="2" height="2"/></g>
<path d="M182,955 L193,966 M193,955 L182,966" stroke="#d0d2d6" stroke-width="2.2"/>
<path d="M210,968 L220,957" stroke="#b5b8bd" stroke-width="3" stroke-linecap="round"/>
<path d="M219,958 A5,5 0 1 1 226,953 L222,955 L221.5,957.5 L224,958 L228,956 A5,5 0 0 1 219,961 Z" fill="#b5b8bd"/>
<rect x="239.5" y="953.5" width="19" height="15" fill="#c0c0c0" stroke="#505050" stroke-width="1.2"/>
<rect x="239.5" y="953.5" width="19" height="3" fill="#505050"/>
<path d="M241.5,960 L244,962 L241.5,964 M245,965 H249" stroke="#505050" stroke-width="1" fill="none"/>
<polygon points="261,958 270,958 265.5,963" fill="#505050"/>
<polygon points="1741,963 1751,963 1746,958" fill="#555"/>
</svg>
<div class="t" style="left:280px;top:955px;font-family:'Liberation Mono',monospace;font-style:italic;font-size:15px;color:#707070">Type a command</div>

<!-- STATUS BAR -->
<svg width="1919" height="1019" style="left:0;top:0">
<polygon points="63,984 136.5,984 125,1013.5 52,1013.5" fill="#3b4453"/>
<g fill="#e0e0e0"><rect x="20" y="991.5" width="20" height="2.5"/><rect x="20" y="998" width="20" height="2.5"/><rect x="20" y="1004.5" width="20" height="2.5"/></g>
<g stroke="#5a6270" stroke-width="1.1"><path d="M216,990 L209,1008 M298,990 L291,1008 M350,990 L343,1008"/></g>
<path d="M321,990 V1008 M312,999 H330" stroke="#e8e8e8" stroke-width="2.2"/>
<g fill="#3b4453">
<rect x="1207" y="986" width="59" height="31"/>
<rect x="1269" y="986" width="80" height="31"/>
<rect x="1352" y="986" width="30" height="31"/>
<rect x="1383" y="986" width="129" height="31"/>
<rect x="1514" y="986" width="80" height="31"/>
<rect x="1597" y="986" width="132" height="31"/>
<rect x="1732" y="986" width="50" height="31"/>
<rect x="1784" y="986" width="29" height="31"/>
<rect x="1816" y="986" width="30" height="31"/>
<rect x="1849" y="986" width="3" height="31"/>
<rect x="1855" y="986" width="30" height="31"/>
<rect x="1888" y="986" width="31" height="31"/>
</g>
<rect x="1414" y="988" width="28" height="29" fill="#5c8fc8"/>
<rect x="1545" y="988" width="28" height="29" fill="#5c8fc8"/>
<rect x="1598" y="988" width="28" height="29" fill="#5c8fc8"/>
<g stroke="#e0e0e0" stroke-width="1.2" fill="none">
<path d="M1278,992 V1011 M1283,992 V1011 M1288,992 V1011 M1274,996 H1293 M1274,1001 H1293 M1274,1006 H1293"/>
<path d="M1358,994 V1003 M1353.5,998.5 H1362.5" />
<path d="M1389,991 V1012 H1408 M1389,1005 H1396 V1012"/>
<circle cx="1427" cy="1001" r="8"/><path d="M1427,1001 L1436,992 M1427,1001 H1439"/>
<path d="M1520,1011 L1538,995 M1520,1011 H1539"/>
<rect x="1550" y="994" width="18" height="18"/><rect x="1547" y="991" width="6" height="6" fill="#5c8fc8"/>
<path d="M1821,989.5 H1828 V996.5 H1821 Z M1826,1011 L1829,1005 L1832,1011 Z"/><circle cx="1837" cy="1000" r="4"/>
<rect x="1862" y="994" width="19" height="15"/><path d="M1865,1006 L1870,1001 M1865,1006 H1868 M1865,1006 V1003 M1878,997 L1873,1002 M1878,997 H1875 M1878,997 V1000"/>
</g>
<rect x="1361" y="1003" width="16" height="6" fill="#e0e0e0"/><rect x="1362.5" y="1004.5" width="4" height="3" fill="#3b4453"/>
<g fill="#e0e0e0">
<rect x="1306" y="993" width="3" height="3"/><rect x="1312" y="993" width="3" height="3"/><rect x="1318" y="993" width="3" height="3"/>
<rect x="1306" y="999.5" width="3" height="3"/><rect x="1312" y="999.5" width="3" height="3"/><rect x="1318" y="999.5" width="3" height="3"/>
<rect x="1306" y="1006" width="3" height="3"/><rect x="1312" y="1006" width="3" height="3"/><rect x="1318" y="1006" width="3" height="3"/>
<rect x="1530" y="1002" width="4" height="4"/>
<polygon points="1334,998 1343,998 1338.5,1003"/><polygon points="1448,998 1457,998 1452.5,1003"/><polygon points="1497,998 1506,998 1501.5,1003"/>
<polygon points="1579,998 1588,998 1583.5,1003"/><polygon points="1714,998 1723,998 1718.5,1003"/><polygon points="1767,998 1776,998 1771.5,1003"/>
<rect x="1894" y="993" width="19" height="2.5"/><rect x="1894" y="1000" width="19" height="2.5"/><rect x="1894" y="1007" width="19" height="2.5"/>
</g>
<path d="M1478,991 V1012" stroke="#50c070" stroke-width="1.2"/><path d="M1470,993 L1486,1011" stroke="#e04070" stroke-width="1.2"/><rect x="1475.5" y="999" width="5" height="5" fill="none" stroke="#e0e0e0" stroke-width="1"/>
<!-- annotation icons -->
<path d="M1610.4,992 L1612.7,1001 L1619.2,1011.7 L1610.4,1006 L1602.0,1011.7 L1608.1000000000001,1001 Z" fill="#f4f4f4" stroke="#f4f4f4" stroke-width="1.2" stroke-linejoin="round"/>
<circle cx="1618" cy="996.4" r="3.3" fill="none" stroke="#f0f0f0" stroke-width="1.1"/>
<path d="M1640.4,992 L1642.7,1001 L1649.2,1011.7 L1640.4,1006 L1632.0,1011.7 L1638.1000000000001,1001 Z" fill="#d8d8d8" stroke="#d8d8d8" stroke-width="1.2" stroke-linejoin="round"/>
<path d="M1650,992 L1646,997.5 H1649 L1645.5,1002 L1651,996 H1648 Z" fill="#d8d8d8"/>
<path d="M1671.4,992 L1673.7,1001 L1680.2,1011.7 L1671.4,1006 L1663.0,1011.7 L1669.1000000000001,1001 Z" fill="#d8d8d8" stroke="#d8d8d8" stroke-width="1.2" stroke-linejoin="round"/>
<!-- gear -->
<circle cx="1747" cy="1001" r="6.5" fill="none" stroke="#d8d8d8" stroke-width="4"/>
<g stroke="#d8d8d8" stroke-width="3.2"><path d="M1747,991 V1011 M1737,1001 H1757 M1740,994 L1754,1008 M1754,994 L1740,1008"/></g>
<circle cx="1747" cy="1001" r="2.5" fill="#3b4453"/>
<path d="M1798,991 V1011 M1788,1001 H1808" stroke="#e8e8e8" stroke-width="2.5"/>
</svg>
<div class="t" style="left:72px;top:992px;font-weight:bold;color:#fafafa">Model</div>
<div class="t" style="left:146px;top:992px">Layout1</div>
<div class="t" style="left:228px;top:992px">Layout2</div>
<div class="t" style="left:1212px;top:995px;font-size:14px">MODEL</div>
<div class="t" style="left:1693px;top:996px;font-size:13.5px">1:1</div>

<!-- DRAWING -->
<div class="a" style="left:760px;top:377px;width:468px;height:465px;background:#fcfcfc"></div>
<svg width="1919" height="1019" style="left:0;top:0">
<g fill="none" stroke="#4a4a4a" stroke-width="0.9">
<!-- NORTH-SOUTH SECTION -->
<path d="M848.7,454.5 H860 V452 H866 V449 H872 V446 H876 V449 H880.5 V380 H1142 V409.6"/>
<path d="M880.5,380 L937.4,406.7"/>
<path d="M884.3,447 V385.5 L936.4,411.5 V447.5 H884.3"/>
<path d="M939.3,406 V451 H1102 V403.4 H939.3 V406 L937.4,406.7"/>
<path d="M939.3,405 H1102" stroke-width="0.6"/>
<rect x="952" y="416" width="36" height="32.5"/><path d="M967.8,416 V448.5"/>
<path d="M1102,409.6 H1142 M1104,412 H1139 M1104,412 V448 H1139 M1113,412 V448"/>
<path d="M1104,418 H1113 M1104,424 H1113 M1104,430 H1113 M1104,436 H1113 M1104,442 H1113"/>
<rect x="1120" y="397" width="13" height="10"/><path d="M1120,400 H1133 M1120,403 H1133"/>
<path d="M1139,404 V448 M1142,409.6 H1145 V453 H1186 V460.3 H1196"/>
<rect x="895" y="436" width="11" height="11"/><path d="M895,447 L906,436"/>
<path d="M866,445 V452" stroke-width="0.7"/>
<!-- EAST-WEST SECTION -->
<path d="M853.5,533.7 H880.5 V462.3 L939.3,485.8 V490 M884.3,487 V467.5 L938.3,490.7 V530.2 H926 V488 H923 V530.2 H884.3"/>
<path d="M881,533 V487 H884.3"/>
<path d="M940.8,486.2 H1066.5 V533 H940.8 Z"/>
<path d="M1040.5,494 V533 M1048.5,494 V533 M1056.8,494 V533 M1040.5,494 H1066.5"/>
<path d="M1066.5,486.8 L1125.4,463.1 V534 H1154.3 M1069.5,490 L1123,467.5 V530 H1084 V484 M1084,530 H1069.5 V490"/>
<path d="M1098,478 V530 M1110,474 V530 M1098,488 H1110 M1098,497 H1110 M1084,497 H1123"/>
<rect x="915" y="505" width="6" height="6"/><rect x="903" y="518" width="8" height="6"/><path d="M907,524 V530"/>
<path d="M925,480 L938,486" stroke-width="1.6"/><path d="M1080,479 L1098,472" stroke-width="1.6"/>
<!-- PLAN -->
<path d="M859.1,542.7 L1179.2,543.2 L1183.8,828.6 L858.2,828.6 Z" stroke="#8a8a8a" stroke-width="0.7"/>
<path d="M1001,545 V573" stroke-width="0.8"/>
<path d="M1001,558.7 A135.3,135.3 0 0 0 865.7,694 V828.6" stroke="#777" stroke-width="0.7"/>
<path d="M1001,565 A129,129 0 0 0 872,694 V828.6" stroke="#777" stroke-width="0.7"/>
<path d="M877.4,700 V828.6" stroke="#777" stroke-width="0.7"/>
<path d="M1001.0,570.5 A123.5,123.5 0 0 0 901.1,621.4 L893.8,616.1 A132.5,132.5 0 0 0 880.0,640.1 L888.2,643.8 A123.5,123.5 0 0 0 933.7,797.6 L940.1,797.4" stroke-width="1"/>
<path d="M1001.0,574.0 A120,120 0 0 0 904.5,622.6 L897.3,617.3 A129,129 0 0 0 882.7,642.6 L891.0,646.2 A120,120 0 0 0 940.1,797.4" stroke-width="1"/>
<!-- courtyard -->
<path d="M1112,629.8 H997 Q985,630 945.7,646.3 L949.4,655.4 A61,64.4 0 0 0 997,758.4 H1107" stroke-width="1"/>
<path d="M1101,632.5 H997.5 Q986,633 948,648 M951.5,657.5 A58.5,62 0 0 0 997.5,756 H1100" stroke-width="0.8"/>
<path d="M946,646 L962,640" stroke-width="1.8" stroke="#555"/>
<path d="M1101,632.5 V730 H1110 V735 H1120 V747 H1139 V616 M1112,629.8 V705 H1101 M1101,643 H1112 M1101,657 H1112 M1101,671 H1112 M1101,685 H1112" stroke-width="0.9"/>
<path d="M1142,616 V817" stroke-width="0.9"/>
<!-- kitchen bath -->
<path d="M999.6,572.4 H1062 V615.8 H999.6 Z" stroke-width="1"/>
<path d="M1001.8,575 V588 M1001.8,601 V613.5 H1059 V601 M1059,588 V575 H1042" stroke-width="0.9"/>
<path d="M1001.8,585.8 H1059" stroke-width="0.6"/>
<path d="M1003,572.4 H1042" stroke="#777" stroke-width="2"/>
<rect x="1012" y="577" width="7" height="8" rx="1.5" stroke-width="0.7"/><rect x="1019" y="577" width="8" height="8" rx="1.5" stroke-width="0.7"/><rect x="1027" y="577" width="6" height="8" stroke-width="0.7"/>
<circle cx="1050" cy="579" r="1.2" fill="#555"/><circle cx="1048" cy="583" r="1.2" fill="#555"/><circle cx="1052" cy="583" r="1.2" fill="#555"/>
<path d="M1016,613.5 V607 H1059 M1045,607 V613.5"/>
<path d="M1062,572.4 H1084" stroke-width="0.6"/>
<path d="M1084,572.4 H1141.6 V616 M1084,572.4 V609 M1086.5,575 V614 H1082 M1086.5,575 H1139 V588 M1139,600 V616 M1096,615.8 H1141.6" stroke-width="0.9"/>
<path d="M1062,615.8 H1075 M1074,615.8 H1086" stroke-width="0.6"/>
<rect x="1102" y="578" width="14" height="30" stroke-width="0.7"/><circle cx="1108.5" cy="594" r="3.5" stroke-width="0.7"/>
<path d="M1116,580 H1139 M1116,589 H1139 M1116,592 H1139" stroke-width="0.7"/>
<path d="M1093,578 H1100 V586 H1093 Q1090,582 1093,578" stroke-width="0.7"/>
<rect x="1077" y="596" width="6" height="7" stroke-width="0.7"/><rect x="1082" y="608" width="4" height="5" stroke-width="0.7"/>
<rect x="1122" y="617" width="8" height="7" stroke-width="0.6" stroke="#999"/>
<path d="M1139,616 V747" stroke-width="0.9"/>
<!-- table -->
<circle cx="953" cy="612.5" r="13"/>
<g stroke-width="0.8" stroke="#666"><circle cx="953" cy="592" r="3.6"/><circle cx="967.5" cy="598" r="3.6"/><circle cx="973" cy="612.5" r="3.6"/><circle cx="967" cy="626.5" r="3.6"/><circle cx="953" cy="632" r="3.6"/><circle cx="939" cy="626.5" r="3.6"/><circle cx="933" cy="612.5" r="3.6"/><circle cx="939" cy="598" r="3.6"/></g>
<path d="M1100.5,730 V757" stroke-width="0.6" stroke="#888"/>
<!-- bottom -->
<path d="M899.3,763 V815.8 H1142 V747 M899,790.3 H915 M935,797 V815.8" stroke-width="1"/>
<path d="M968,815.8 V784 H975 V779 H983 V774.8 H1089 M970.5,815.8 V786" stroke-width="1"/>
<path d="M1005,775 V815.8 M1028.8,775 V815.8 M1078,775 V815.8 M1089,774.8 V791 H1103 M1078,790 H1089" stroke-width="0.9"/>
<path d="M1107,758.4 H1140 M1119,759 Q1118,782 1103,790" stroke-width="0.9"/>
<path d="M912,815.8 V820 H935 V815.8 M952,815.8 V820 H970 V815.8" stroke-width="0.8"/>
<circle cx="1012" cy="790" r="3"/><path d="M1008,804 H1016 V810 H1008 Z"/>
<path d="M897,750 L943,726.5 M901,756 L946,732 M897,750 L901,756" stroke="#888" stroke-width="0.7"/>
<!-- north symbol -->
<circle cx="818.5" cy="800.7" r="11.8" stroke="#555" stroke-width="0.9"/>
<path d="M806,801 H830.5" stroke="#444" stroke-width="1.2"/><path d="M818.5,789 V812.5" stroke="#666" stroke-width="0.7"/>
</g>
<g font-family="Liberation Serif" font-style="italic" font-weight="bold" font-size="7.2" fill="#2a2a2a">
<text x="881.5" y="458.8" textLength="94">North-south section; scale:   1/150.</text>
<text x="881" y="539.8" textLength="46">East-west section.</text>
<text x="860" y="836.8" textLength="107">Plot and first-floor plan; scale:   1/150.</text>
</g>
<g font-family="Liberation Sans" font-size="5" fill="#555">
<text x="911" y="443">main room</text><text x="1122" y="446">study</text>
<text x="1098" y="529">bedroom</text>
<text x="1022" y="598">kitchen</text><text x="1116" y="606">bathroom</text>
<text x="898" y="685">main room</text><text x="1118" y="685">study</text>
<text x="978" y="798">storage</text><text x="1043" y="799">bedroom</text><text x="1105" y="800">bedroom</text>
<text x="801" y="803">N</text>
</g>
<!-- grips -->
<path d="M759,780 V842 H821" stroke="#c8c8c8" stroke-width="1.5" fill="none"/>
<rect x="754.5" y="836.5" width="11" height="11" fill="none" stroke="#e8e8e8" stroke-width="1.6"/>
</svg>


</body></html>
